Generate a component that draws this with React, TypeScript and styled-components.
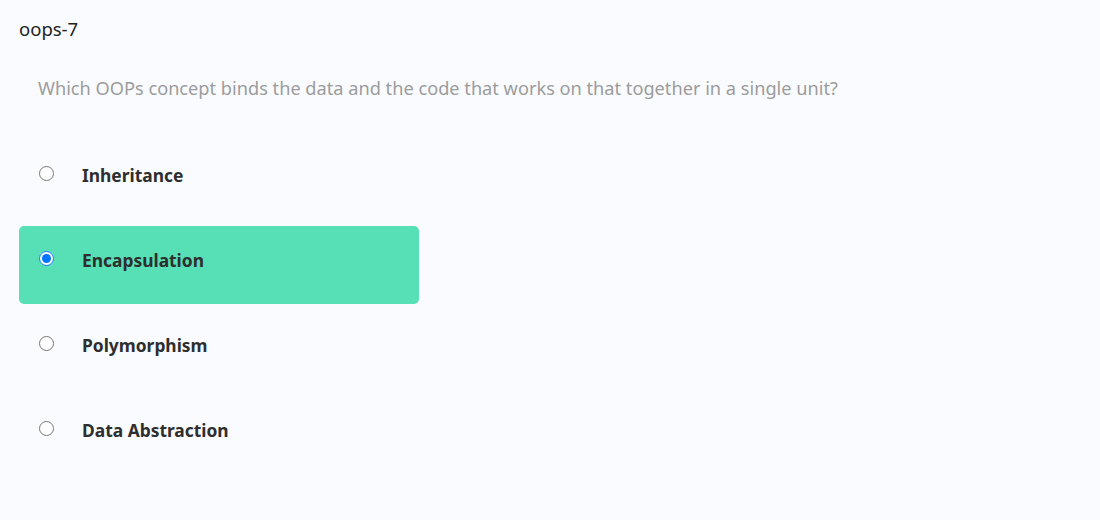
import React from "react";
import styled, { createGlobalStyle } from "styled-components";

const Global = createGlobalStyle`
  html, body { margin: 0; padding: 0; background: #f9fbfe; }
  body { font-family: "Noto Sans", "Open Sans", sans-serif; }
`;

const Page = styled.div`
  padding: 17px 19px 0;
  min-height: 520px;
  box-sizing: border-box;
  background: #f9fbfe;
`;

const Title = styled.div`
  font-size: 18.5px;
  line-height: 24px;
  color: #222;
`;

const Question = styled.div`
  margin: 35px 0 0 19px;
  font-size: 18.2px;
  line-height: 24px;
  color: #9c9c9c;
`;

const Options = styled.div`
  margin-top: 41px;
  display: grid;
  gap: 7px;
  width: 400px;
`;

const Option = styled.label<{ $selected?: boolean }>`
  display: flex;
  align-items: center;
  height: 78px;
  box-sizing: border-box;
  padding: 0 20px 10px;
  border-radius: 5px;
  background: ${(p) => (p.$selected ? "#57dfb6" : "transparent")};
  cursor: pointer;
`;

const Radio = styled.input`
  margin: 0 0 3px 0;
  width: 15px;
  height: 15px;
`;

const Label = styled.span`
  margin-left: 28px;
  font-size: 17.4px;
  font-weight: 700;
  color: #2e2e2e;
`;

const options = ["Inheritance", "Encapsulation", "Polymorphism", "Data Abstraction"];

export default function App() {
  return (
    <>
      <Global />
      <Page>
        <Title>oops-7</Title>
        <Question>
          Which OOPs concept binds the data and the code that works on that together in a single unit?
        </Question>
        <Options>
          {options.map((o) => (
            <Option key={o} $selected={o === "Encapsulation"}>
              <Radio type="radio" name="q" readOnly checked={o === "Encapsulation"} />
              <Label>{o}</Label>
            </Option>
          ))}
        </Options>
      </Page>
    </>
  );
}
